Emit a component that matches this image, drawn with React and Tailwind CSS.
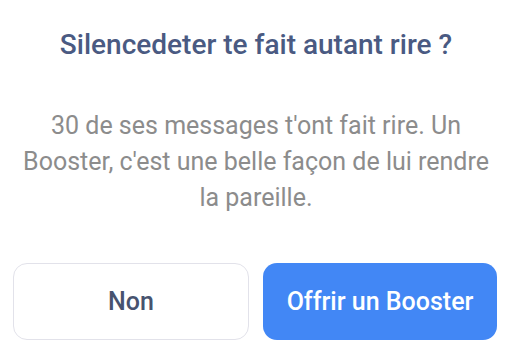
export default function App() {
  return (
    <div className="w-[512px] h-[360px] bg-white flex flex-col items-center font-['Roboto',sans-serif]">
      <h1 className="mt-[28px] text-[28px] leading-[34px] font-medium text-[#4a5a82] text-center">
        Silencedeter te fait autant rire ?
      </h1>
      <p className="mt-[46px] px-[14px] text-[25px] leading-[36px] text-[#8c8c8c] text-center">
        30 de ses messages t'ont fait rire. Un Booster, c'est une belle façon de lui rendre la pareille.
      </p>
      <div className="mt-auto mb-[20px] w-full pl-[13px] pr-[15px] flex gap-[14px]">
        <button className="flex-1 h-[77px] rounded-[14px] border border-[#e2e2ea] bg-white text-[25px] font-medium text-[#47536f]">
          Non
        </button>
        <button className="flex-1 h-[77px] rounded-[14px] bg-[#4287f5] text-[25px] font-medium text-white">
          Offrir un Booster
        </button>
      </div>
    </div>
  );
}
